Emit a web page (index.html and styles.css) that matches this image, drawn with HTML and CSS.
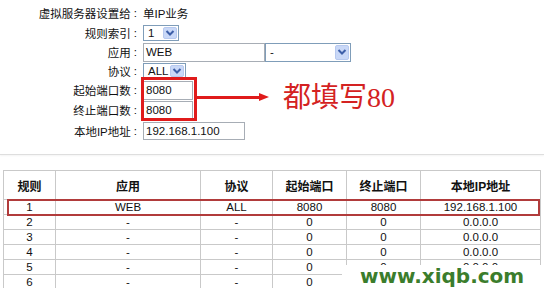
FILE: index.html
```html
<!DOCTYPE html>
<html lang="zh-CN">

<head>
    <meta charset="UTF-8">
    <title>虚拟服务器</title>
    <link rel="stylesheet" href="styles.css">
</head>

<body>
    <div class="page">
        <div class="setup">
            <div class="form">
                <div class="label">虚拟服务器设置给<span class="colon">:</span></div>
                <div class="value">单IP业务</div>

                <div class="label">规则索引<span class="colon">:</span></div>
                <div class="value">
                    <div class="select select-index"><span class="select-text">1</span><span class="drop"><svg width="10" height="8" viewBox="0 0 10 8"><path d="M1.5 2 L5 5.5 L8.5 2" fill="none" stroke="#3d5fa8" stroke-width="2"/></svg></span></div>
                </div>

                <div class="label">应用<span class="colon">:</span></div>
                <div class="value">
                    <div class="input input-app">WEB</div>
                    <div class="select select-app"><span class="select-text">-</span><span class="drop"><svg width="10" height="8" viewBox="0 0 10 8"><path d="M1.5 2 L5 5.5 L8.5 2" fill="none" stroke="#3d5fa8" stroke-width="2"/></svg></span></div>
                </div>

                <div class="label">协议<span class="colon">:</span></div>
                <div class="value">
                    <div class="select select-proto"><span class="select-text">ALL</span><span class="drop"><svg width="10" height="8" viewBox="0 0 10 8"><path d="M1.5 2 L5 5.5 L8.5 2" fill="none" stroke="#3d5fa8" stroke-width="2"/></svg></span></div>
                </div>

                <div class="label">起始端口数<span class="colon">:</span></div>
                <div class="value">
                    <div class="input input-port">8080</div>
                </div>

                <div class="label">终止端口数<span class="colon">:</span></div>
                <div class="value">
                    <div class="input input-port">8080</div>
                </div>

                <div class="label">本地IP地址<span class="colon">:</span></div>
                <div class="value">
                    <div class="input input-ip">192.168.1.100</div>
                </div>
            </div>

            <!-- annotation -->
            <div class="mark-box"></div>
            <div class="mark-arrow"><span class="arrow-head"></span></div>
            <div class="mark-text">都填写80</div>
        </div>

        <div class="divider"></div>

        <table class="rules">
            <colgroup>
                <col style="width: 52px">
                <col style="width: 145px">
                <col style="width: 72px">
                <col style="width: 74px">
                <col style="width: 74px">
                <col>
            </colgroup>
            <thead>
                <tr>
                    <th>规则</th>
                    <th>应用</th>
                    <th>协议</th>
                    <th>起始端口</th>
                    <th>终止端口</th>
                    <th>本地IP地址</th>
                </tr>
            </thead>
            <tbody>
                <tr><td>1</td><td>WEB</td><td>ALL</td><td>8080</td><td>8080</td><td>192.168.1.100</td></tr>
                <tr><td>2</td><td>-</td><td>-</td><td>0</td><td>0</td><td>0.0.0.0</td></tr>
                <tr><td>3</td><td>-</td><td>-</td><td>0</td><td>0</td><td>0.0.0.0</td></tr>
                <tr><td>4</td><td>-</td><td>-</td><td>0</td><td>0</td><td>0.0.0.0</td></tr>
                <tr><td>5</td><td>-</td><td>-</td><td>0</td><td>0</td><td>0.0.0.0</td></tr>
                <tr><td>6</td><td>-</td><td>-</td><td>0</td><td>0</td><td>0.0.0.0</td></tr>
            </tbody>
        </table>

        <div class="row-mark"></div>
        <div class="watermark">www.xiqb.com</div>
    </div>
</body>

</html>
```

FILE: styles.css
```css
body {
    margin: 0;
    font-family: "Liberation Sans", "Noto Sans CJK SC", sans-serif;
    font-size: 11.5px;
    color: #111;
    background: #fff;
}

.page {
    position: relative;
    width: 544px;
    height: 288px;
    overflow: hidden;
}

.setup {
    position: relative;
    height: 154px;
}

.form {
    display: grid;
    grid-template-columns: 140px auto;
    grid-template-rows: 20px 19px 20px 18px 20px 20px 21px;
    padding-top: 3px;
}

.label {
    display: flex;
    align-items: center;
    justify-content: flex-end;
    padding-right: 3px;
    white-space: nowrap;
}

.colon {
    margin-left: 3px;
}

.value {
    display: flex;
    align-items: center;
    padding-left: 3px;
}

.input,
.select {
    box-sizing: border-box;
    display: flex;
    align-items: center;
    border: 1px solid #a7adb5;
    background: #fff;
    font-size: 11.5px;
}

.input {
    padding-left: 2px;
}

.input-app {
    width: 122px;
    height: 19px;
}

.input-port {
    width: 50px;
    height: 19px;
}

.input-ip {
    width: 102px;
    height: 18px;
}

.select {
    justify-content: space-between;
    padding: 1px;
    border-color: #7f9db9;
}

.select-text {
    padding-left: 3px;
}

.drop {
    display: flex;
    align-items: center;
    justify-content: center;
    width: 14px;
    height: 100%;
    box-sizing: border-box;
    background: #c9d8f7;
    border: 1px solid #b7c9ef;
    border-radius: 2px;
}

.select-index {
    width: 36px;
    height: 16px;
}

.select-app {
    width: 86px;
    height: 19px;
}

.select-proto {
    width: 43px;
    height: 16px;
}

/* red annotation */
.mark-box {
    position: absolute;
    left: 141px;
    top: 77px;
    width: 56px;
    height: 44px;
    box-sizing: border-box;
    border: 3px solid #e01b1b;
}

.mark-arrow {
    position: absolute;
    left: 197px;
    top: 96px;
    width: 63px;
    height: 3px;
    background: #e01b1b;
}

.arrow-head {
    position: absolute;
    right: -9px;
    top: -3px;
    border-left: 10px solid #e01b1b;
    border-top: 4.5px solid transparent;
    border-bottom: 4.5px solid transparent;
}

.mark-text {
    position: absolute;
    left: 283px;
    top: 82px;
    font-family: "Liberation Serif", "Noto Sans CJK SC", serif;
    font-size: 28px;
    line-height: 32px;
    color: #d42222;
}

.divider {
    height: 1px;
    background: #dedede;
    box-shadow: 0 1px 2px #eee;
}

.rules {
    margin: 15px 0 0 3px;
    width: 538px;
    table-layout: fixed;
    border-collapse: collapse;
    border: 1px solid #a9a9a9;
}

.rules th,
.rules td {
    border: 1px solid #c9c9c9;
    padding: 0;
    text-align: center;
    white-space: nowrap;
}

.rules th {
    height: 28px;
    font-size: 12px;
    font-weight: bold;
}

.rules td {
    height: 14px;
    line-height: 14px;
    font-size: 11.5px;
}

.row-mark {
    position: absolute;
    left: 7px;
    top: 199px;
    width: 533px;
    height: 17px;
    box-sizing: border-box;
    border: 2px solid #b13b3b;
}

.watermark {
    position: absolute;
    left: 342px;
    top: 265px;
    width: 202px;
    height: 23px;
    padding-left: 18px;
    box-sizing: border-box;
    background: #fff;
    font-family: "DejaVu Sans", sans-serif;
    font-size: 20px;
    font-weight: bold;
    line-height: 23px;
    color: #3b7d2c;
}
```
